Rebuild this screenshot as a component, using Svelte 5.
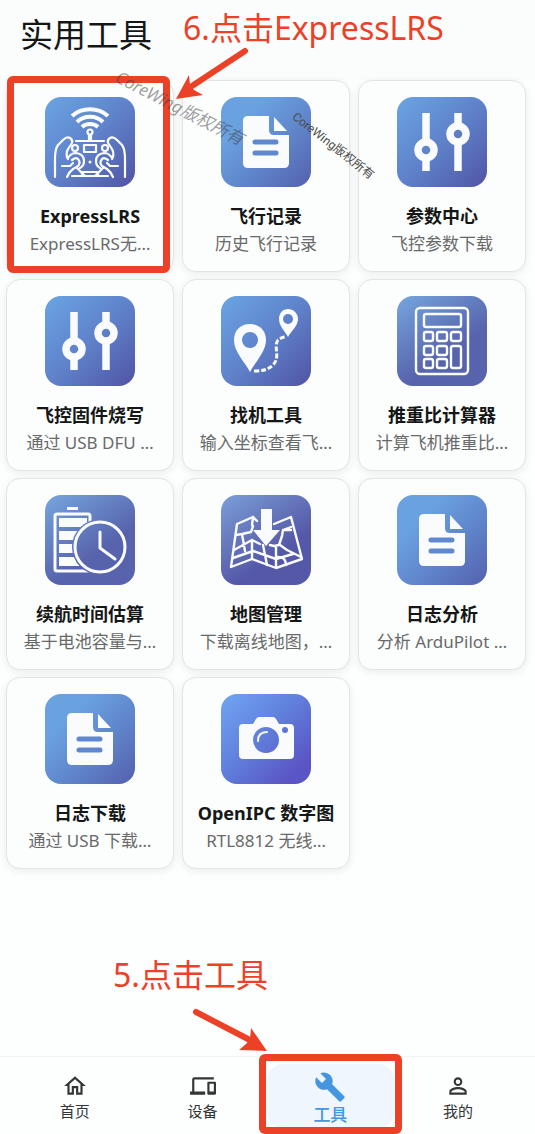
<script lang='ts'>

    type Tool = { name: string; desc: string; icon: string; tone?: string; marked?: boolean };

    const tools: Tool[] = [
        { name: 'ExpressLRS', desc: 'ExpressLRS无…', icon: 'remote', marked: true },
        { name: '飞行记录', desc: '历史飞行记录', icon: 'doc', tone: 'light' },
        { name: '参数中心', desc: '飞控参数下载', icon: 'sliders' },
        { name: '飞控固件烧写', desc: '通过 USB DFU …', icon: 'sliders' },
        { name: '找机工具', desc: '输入坐标查看飞…', icon: 'route' },
        { name: '推重比计算器', desc: '计算飞机推重比…', icon: 'calc', tone: 'deep' },
        { name: '续航时间估算', desc: '基于电池容量与…', icon: 'battery', tone: 'deep' },
        { name: '地图管理', desc: '下载离线地图，…', icon: 'map', tone: 'violet' },
        { name: '日志分析', desc: '分析 ArduPilot …', icon: 'doc', tone: 'light' },
        { name: '日志下载', desc: '通过 USB 下载…', icon: 'doc', tone: 'light' },
        { name: 'OpenIPC 数字图', desc: 'RTL8812 无线…', icon: 'camera', tone: 'bright' },
    ];

    // material icon paths, 24x24
    const tabs = [
        { label: '首页', path: 'M12 5.69l5 4.5V18h-2v-6H9v6H7v-7.81l5-4.5M12 3L2 12h3v8h6v-6h2v6h6v-8h3L12 3z' },
        { label: '设备', path: 'M4 6h18V4H4c-1.1 0-2 .9-2 2v11H0v3h14v-3H4V6zm19 2h-6c-.55 0-1 .45-1 1v10c0 .55.45 1 1 1h6c.55 0 1-.45 1-1V9c0-.55-.45-1-1-1zm-1 9h-4v-7h4v7z' },
        { label: '工具', path: 'M22.7 19l-9.1-9.1c.9-2.3.4-5-1.5-6.9-2-2-5-2.4-7.4-1.3L9 6 6 9 1.6 4.7C.4 7.1.9 10.1 2.9 12.1c1.9 1.9 4.6 2.4 6.9 1.5l9.1 9.1c.4.4 1 .4 1.4 0l2.3-2.3c.5-.4.5-1.1.1-1.4z' },
        { label: '我的', path: 'M12 5.9a2.1 2.1 0 110 4.2 2.1 2.1 0 010-4.2m0 9c2.97 0 6.1 1.46 6.1 2.1v1.1H5.9V17c0-.64 3.13-2.1 6.1-2.1M12 4C9.79 4 8 5.79 8 8s1.79 4 4 4 4-1.79 4-4-1.79-4-4-4zm0 9c-2.67 0-8 1.34-8 4v3h16v-3c0-2.66-5.33-4-8-4z' },
    ];

    let active = $state('工具');

</script>

<!-- one hand of the remote, mirrored for the other side -->
{#snippet hand()}
    <path d="M10 80V62q0-10 3-14l5-5q4-4 7-2 3 2 2 5l-4 6q-2 3-1 8l1 2" />
    <path d="M23 61q3-5 8-5 8 1 8 8 0 5-4 7M17 69h8l3-3M27 63q4-3 6-1 3 4 0 7l-5 3q-4 3-6 8M32 71l8 8" />
    <circle cx="30" cy="51" r="3" />
{/snippet}

{#snippet glyph(icon: string)}
    <svg viewBox="0 0 90 90" aria-hidden="true">
        {#if icon === 'remote'}
            <g class="line butt" stroke-width="4">
                <path d="M27 19c10-9 26-9 36 0M32 25c7-7 19-7 26 0M37 30c4-4 12-4 16 0" />
            </g>
            <g class="line" stroke-width="2.2">
                <circle cx="45" cy="35" r="2.5" />
                <path d="M44 38v5M46 38v5M31 44h28M39 48h12v7H39zM27 79h36M37 79v-4h16v4" />
                {@render hand()}
                <g transform="translate(90 0) scale(-1 1)">{@render hand()}</g>
            </g>
            <circle class="solid" cx="45" cy="65" r="1.5" />
        {:else if icon === 'doc'}
            <path class="solid" d="M27 19h21v14q0 5 5 5h15v28q0 5-5 5H27q-5 0-5-5V24q0-5 5-5z" />
            <path class="solid" d="M53 20l13 14H53z" />
            <path class="cut" d="M34 45h21M34 56h21" />
        {:else if icon === 'sliders'}
            <g class="line butt" stroke-width="7.5">
                <path d="M29 16v29M29 61v13M61 16v13M61 45v29" />
                <circle cx="29" cy="53" r="8" />
                <circle cx="61" cy="37" r="8" />
            </g>
        {:else if icon === 'route'}
            <path class="solid" fill-rule="evenodd" d="M29 76c-5-10-16-20-16-32 0-10 7-16 16-16s16 6 16 16c0 12-11 22-16 32zM29 36a8 8 0 100 16 8 8 0 000-16z" />
            <path class="solid" fill-rule="evenodd" d="M67 41c-3-6-9-11-9-18 0-6 4-10 9-10s10 4 10 10c0 7-7 12-10 18zM67 18a5 5 0 100 10 5 5 0 000-10z" />
            <path class="line butt" stroke-width="3" stroke-dasharray="5 2" d="M33 75c8 0 14-1 19-6 8-8 0-18 5-25q4-3 8-3" />
        {:else if icon === 'calc'}
            <g class="line" stroke-width="2.4">
                <rect x="19" y="12" width="52" height="66" rx="4" />
                <rect x="27" y="18" width="37" height="13" rx="2" />
                {#each [36, 50, 63] as y}
                    <rect x="27" {y} width="9" height="9" rx="2" />
                    <rect x="40" {y} width="10" height="9" rx="2" />
                {/each}
                <rect x="54" y="36" width="10" height="9" rx="2" />
                <rect x="54" y="50" width="10" height="22" rx="2" />
            </g>
        {:else if icon === 'battery'}
            <mask id="clock-gap">
                <rect width="90" height="90" fill="#fff" />
                <circle cx="55" cy="52" r="28" fill="#000" />
            </mask>
            <g mask="url(#clock-gap)">
                <rect class="line" stroke-width="3" x="10" y="19" width="35" height="57" rx="2" />
                <path class="solid" d="M22 12h11v3H22zM14 23h28v9H14zM14 36h28v9H14zM14 49h28v9H14zM14 62h28v9H14z" />
            </g>
            <g class="line" stroke-width="3">
                <circle cx="55" cy="52" r="25" />
                <path d="M55 37v16l15 11" />
            </g>
        {:else if icon === 'map'}
            <g class="line" stroke-width="2.4">
                <path d="M36 26l-4-4-16 7-6 43 21-8 24 9 26-9-11-42-17 7" />
                <path d="M15 40l6-1 9-2 2-6M32 22l-1 8M21 39l3 17M13 55l18-10 8 4M31 45v19M12 63l20-7 23 8 17-5M42 50l4 20M55 51v21M70 32l-8 3-1 6-3 9-5 1-4-1M62 35h8M59 50l7 5 14 7M56 62c7-1 9 4 9 8" />
            </g>
            <path class="solid" d="M40 14h11v21h8L45 51 32 35h8z" />
        {:else if icon === 'camera'}
            <path class="solid" fill-rule="evenodd" d="M22 30h10l3-5q1-2 3-2h14q2 0 3 2l3 5h11q4 0 4 4v27q0 4-4 4H22q-4 0-4-4V34q0-4 4-4zM45 33a13 13 0 100 26 13 13 0 000-26zM64 33a3 3 0 100 6 3 3 0 000-6z" />
            <path class="line" stroke-width="2" d="M37 47q0-9 9-9" />
        {/if}
    </svg>
{/snippet}

<div class="page">
    <header>
        <h1>实用工具</h1>
    </header>

    <main>
        {#each tools as tool}
            <button class="card" type="button">
                <span class="tile {tool.tone ?? ''}">{@render glyph(tool.icon)}</span>
                <span class="name">{tool.name}</span>
                <span class="desc">{tool.desc}</span>
                {#if tool.marked}
                    <span class="frame card-frame"></span>
                {/if}
            </button>
        {/each}
    </main>

    <nav>
        {#each tabs as tab}
            <button class="tab" class:active={active === tab.label} type="button" onclick={() => active = tab.label}>
                <svg viewBox="0 0 24 24" aria-hidden="true"><path d={tab.path} /></svg>
                <span>{tab.label}</span>
                {#if tab.label === '工具'}
                    <span class="frame tab-frame"></span>
                {/if}
            </button>
        {/each}

        <div class="note step-tab">5.点击工具</div>
        <svg class="arrow arrow-tab" viewBox="0 0 80 48" aria-hidden="true">
            <path d="M4 4L56 31" />
            <polygon points="75,43 59,20 58,31 54,36 47,42" />
        </svg>
    </nav>

    <div class="note step-card">6.点击ExpressLRS</div>
    <svg class="arrow arrow-card" viewBox="0 0 80 56" aria-hidden="true">
        <path d="M73 5L20 40" />
        <polygon points="4,53 17,29 18,39 22,44 31,49" />
    </svg>
    <div class="watermark soft">CoreWing版权所有</div>
    <div class="watermark dark">CoreWing版权所有</div>
</div>

<style>

    :global(body) {
        margin: 0;
        background: #fdfefe;
    }

    .page {
        position: relative;
        display: flex;
        flex-direction: column;
        min-height: 100vh;
        overflow: hidden;
        font-family: "Noto Sans", "Noto Sans CJK SC", sans-serif;
        color: #151717;
    }

    button {
        font-family: inherit;
        color: inherit;
        border: 0;
        padding: 0;
        background: none;
        cursor: pointer;
    }

    header {
        padding: 11px 20px 21px;
        background: #fbfdfc;
    }

    h1 {
        margin: 0;
        font-size: 33px;
        line-height: 48px;
        font-weight: 400;
    }

    main {
        display: grid;
        grid-template-columns: repeat(3, 1fr);
        gap: 7px 8px;
        padding: 0 9px 24px 6px;
    }

    .card {
        position: relative;
        display: flex;
        flex-direction: column;
        align-items: center;
        box-sizing: border-box;
        min-width: 0;
        padding: 16px 4px 13px;
        border: 1px solid #e3e5e5;
        border-radius: 14px;
        background: #fcfdfd;
        box-shadow: 0 2px 8px rgba(0, 0, 0, 0.08);
    }

    .tile {
        width: 90px;
        height: 90px;
        border-radius: 16px;
        background: linear-gradient(135deg, #6aa5e3, #5f82ca 50%, #5054a4);
        --cut: #5f88cf;
    }

    .tile.light {
        background: linear-gradient(135deg, #6aa2e0 25%, #5f85cb 60%, #5460ad);
    }

    .tile.deep {
        background: linear-gradient(145deg, #76a6df, #5763ac 62%);
    }

    .tile.violet {
        background: linear-gradient(145deg, #7b9fd8, #5558a7 65%);
    }

    .tile.bright {
        background: linear-gradient(135deg, #71a5f3, #6080dc 45%, #5a55c4 85%);
    }

    .tile svg {
        display: block;
    }

    .solid {
        fill: #fafbfc;
    }

    .line {
        fill: none;
        stroke: #fafbfc;
        stroke-linecap: round;
        stroke-linejoin: round;
    }

    .butt {
        stroke-linecap: butt;
    }

    .cut {
        fill: none;
        stroke: var(--cut);
        stroke-width: 5;
        stroke-linecap: round;
    }

    .name {
        margin-top: 15px;
        font-size: 18px;
        line-height: 28px;
        font-weight: 700;
        white-space: nowrap;
    }

    .desc {
        font-size: 17px;
        line-height: 28px;
        color: #686a6a;
        white-space: nowrap;
    }

    nav {
        position: relative;
        display: grid;
        grid-template-columns: repeat(4, 1fr);
        margin-top: auto;
        padding: 7px 13px 6px 11px;
        border-top: 1px solid #f2f4f4;
    }

    .tab {
        position: relative;
        display: flex;
        flex-direction: column;
        align-items: center;
        justify-content: flex-end;
        box-sizing: border-box;
        height: 64px;
        padding-bottom: 5px;
        font-size: 15px;
        line-height: 24px;
        color: #333636;
        border-radius: 16px;
    }

    .tab svg {
        width: 26px;
        height: 26px;
        fill: currentColor;
    }

    .tab.active {
        padding-bottom: 1px;
        font-size: 17px;
        font-weight: 500;
        color: #4595e0;
        background: #eff6fd;
    }

    .tab.active svg {
        width: 32px;
        height: 32px;
    }

    /* red tutorial marks */
    .frame {
        position: absolute;
        border: 7px solid #ec4127;
        border-radius: 6px;
    }

    .card-frame {
        inset: -5px 3px -2px 0;
    }

    .tab-frame {
        inset: -10px -8px -6px;
    }

    .note {
        position: absolute;
        font-size: 32px;
        line-height: 44px;
        color: #ec4127;
        white-space: nowrap;
    }

    .step-card {
        top: 6px;
        left: 183px;
    }

    .step-tab {
        left: 113px;
        bottom: 137px;
    }

    .arrow {
        position: absolute;
        fill: #ec4127;
    }

    .arrow path {
        stroke: #ec4127;
        stroke-width: 6;
        stroke-linecap: round;
    }

    .arrow-card {
        top: 46px;
        left: 172px;
        width: 80px;
    }

    .arrow-tab {
        left: 192px;
        bottom: 78px;
        width: 80px;
    }

    .watermark {
        position: absolute;
        transform-origin: 0 50%;
        white-space: nowrap;
        pointer-events: none;
    }

    .soft {
        top: 64px;
        left: 117px;
        font-size: 17px;
        line-height: 24px;
        font-style: italic;
        color: rgba(60, 62, 66, 0.5);
        transform: rotate(27deg);
    }

    .dark {
        top: 105px;
        left: 294px;
        font-family: Roboto, "Noto Sans CJK SC", sans-serif;
        font-size: 12px;
        line-height: 20px;
        color: #4c4c4a;
        transform: rotate(38deg);
    }

</style>
